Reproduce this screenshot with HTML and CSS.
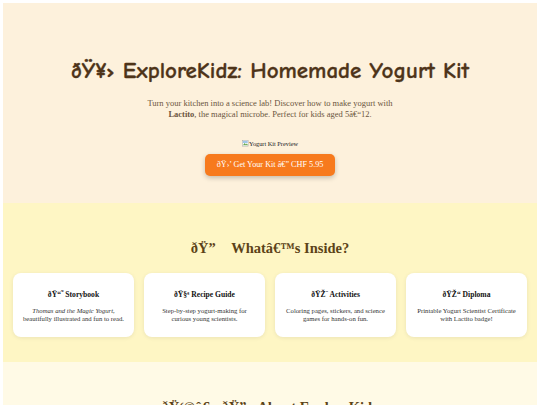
FILE: index.html
```html
<!DOCTYPE html>
<html>
<head lang="en">
    <meta charset="UTF-8">
    <title>ExploreKidz</title>
    <link rel="stylesheet" href="styles.css">
</head>
<body>
<section class="hero">
    <h1>ðŸ¥› ExploreKidz: Homemade Yogurt Kit</h1>
    <p class="intro">Turn your kitchen into a science lab! Discover how to make yogurt with <strong>Lactito</strong>, the magical microbe. Perfect for kids aged 5â€“12.</p>
    <div class="preview">
        <span class="broken"><svg width="7" height="7" viewBox="0 0 16 16"><rect x="1" y="1" width="13" height="13" fill="#fff" stroke="#999"/><path d="M2 12 L6 7 L9 10 L11 8 L14 12 Z" fill="#6aa84f"/><rect x="2" y="2" width="11" height="5" fill="#9fc5e8"/></svg>Yogurt Kit Preview</span>
    </div>
    <a class="buy" href="#">ðŸ›’ Get Your Kit â€” CHF 5.95</a>
</section>

<section class="inside">
    <h2>ðŸ”&#x8D; Whatâ€™s Inside?</h2>
    <div class="cards">
        <div class="card">
            <h3>ðŸ“˜ Storybook</h3>
            <p><em>Thomas and the Magic Yogurt</em>, beautifully illustrated and fun to read.</p>
        </div>
        <div class="card">
            <h3>ðŸ§ª Recipe Guide</h3>
            <p>Step-by-step yogurt-making for curious young scientists.</p>
        </div>
        <div class="card">
            <h3>ðŸŽ¨ Activities</h3>
            <p>Coloring pages, stickers, and science games for hands-on fun.</p>
        </div>
        <div class="card">
            <h3>ðŸŽ“ Diploma</h3>
            <p>Printable Yogurt Scientist Certificate with Lactito badge!</p>
        </div>
    </div>
</section>

<section class="about">
    <h2>ðŸ‘©â€&#x8D;ðŸ”¬ About ExploreKidz</h2>
    <p>ExploreKidz creates hands-on science kits that turn everyday kitchens into little laboratories.</p>
</section>
</body>
</html>
```

FILE: styles.css
```css
*{
    padding: 0;
    margin: 0;
    box-sizing: border-box;
}
body{
    margin: 3px;
    font-family: "Liberation Serif", "Times New Roman", serif;
    background: #fff;
}
.hero{
    background: #fdf1dc;
    text-align: center;
    padding: 56px 10px 27px;
}
.hero h1{
    font-family: "Comic Sans MS", "Comic Neue", cursive;
    font-size: 23px;
    font-weight: 900;
    line-height: 24px;
    color: #4e3419;
    margin-bottom: 15px;
    -webkit-text-stroke: 0.3px #4e3419;
}
.intro{
    font-size: 8.5px;
    line-height: 11px;
    color: #6b5540;
    max-width: 262px;
    margin: 0 auto;
}
.preview{
    margin-top: 19px;
    font-size: 6.3px;
    line-height: 9px;
    color: #222;
}
.broken svg{
    vertical-align: -1px;
}
.buy{
    display: inline-block;
    margin-top: 6px;
    background: #f77a1d;
    color: #fff;
    text-decoration: none;
    font-size: 8.2px;
    line-height: 10px;
    padding: 6px 12px;
    border-radius: 5px;
    box-shadow: 0 2px 5px rgba(0,0,0,0.22);
}
.inside{
    background: #fef6c4;
    padding: 37px 10px 25px;
}
.inside h2, .about h2{
    text-align: center;
    font-size: 14.5px;
    line-height: 17px;
    color: #5c4318;
    margin-bottom: 16px;
}
.cards{
    display: grid;
    grid-template-columns: repeat(4, 1fr);
    gap: 10px;
}
.card{
    background: #fff;
    border-radius: 8px;
    padding: 17px 9px 14px;
    text-align: center;
    box-shadow: 0 1px 4px rgba(0,0,0,0.08);
}
.card h3{
    font-size: 7.6px;
    line-height: 10px;
    color: #111;
    margin-bottom: 7px;
}
.card p{
    font-size: 6.7px;
    line-height: 8px;
    color: #333;
}
.about{
    background: #fffae6;
    padding: 37px 10px 25px;
}
.about p{
    text-align: center;
    font-size: 8.4px;
    color: #6b5540;
}
```
